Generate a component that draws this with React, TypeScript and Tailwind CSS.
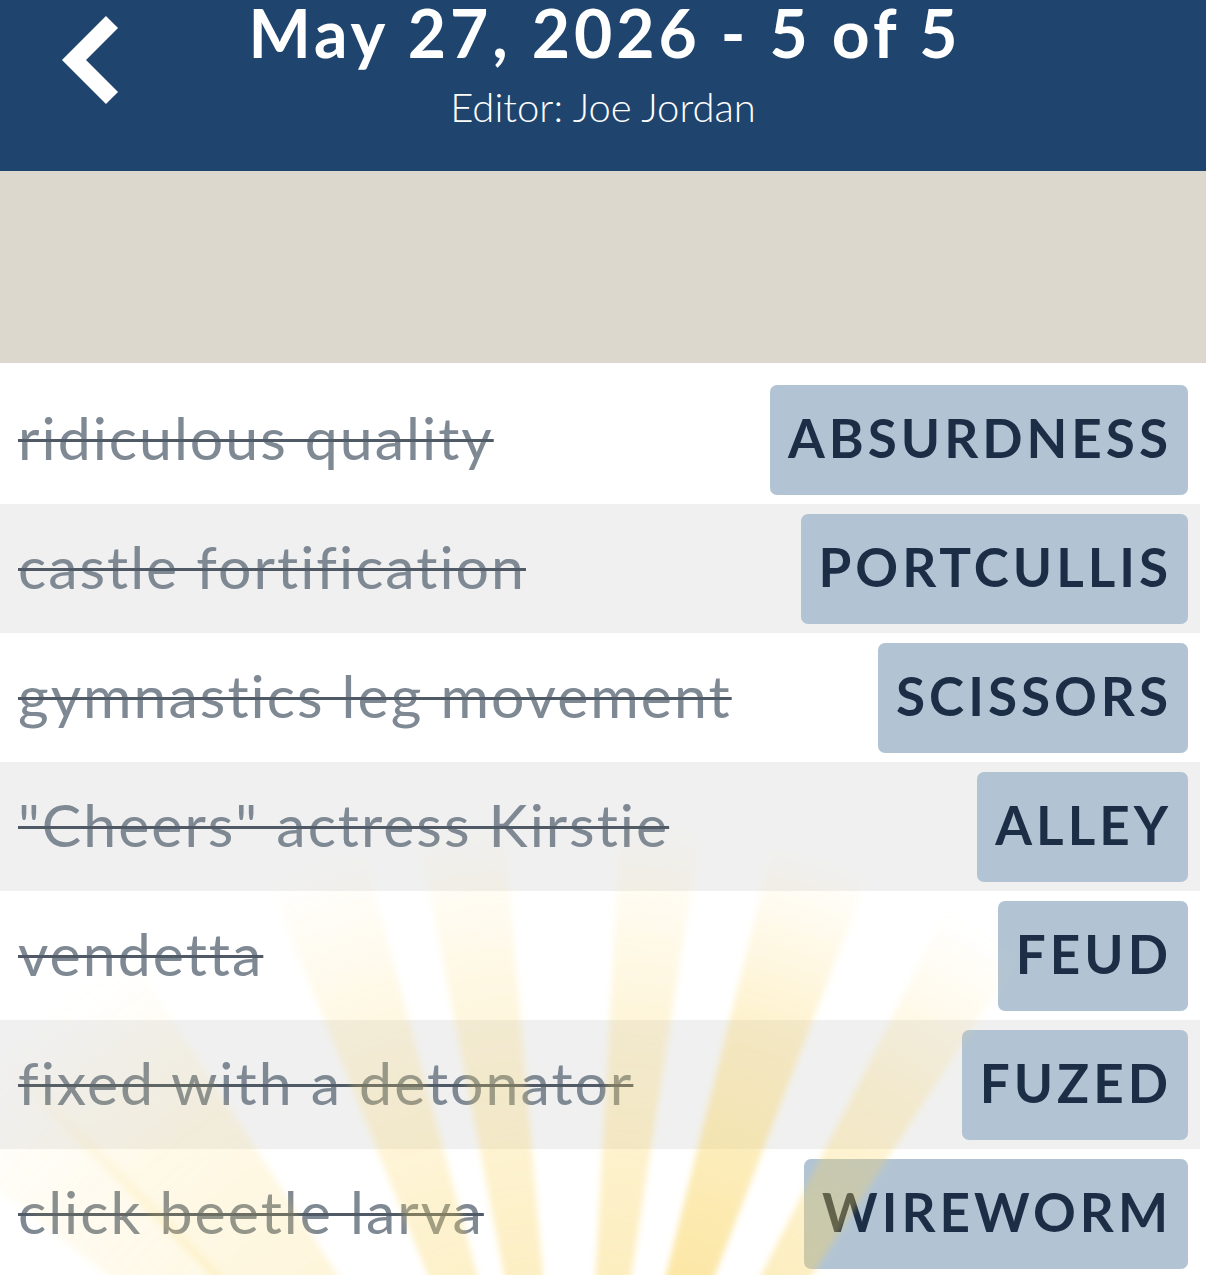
import React from 'react';

type Entry = { clue: string; answer: string };

const entries: Entry[] = [
  { clue: 'ridiculous quality', answer: 'ABSURDNESS' },
  { clue: 'castle fortification', answer: 'PORTCULLIS' },
  { clue: 'gymnastics leg movement', answer: 'SCISSORS' },
  { clue: '"Cheers" actress Kirstie', answer: 'ALLEY' },
  { clue: 'vendetta', answer: 'FEUD' },
  { clue: 'fixed with a detonator', answer: 'FUZED' },
  { clue: 'click beetle larva', answer: 'WIREWORM' },
];

// sunburst rays: [angle from vertical, half width, strength]
const rays: [number, number, number][] = [
  [-48, 4, 0.35],
  [-39, 6, 0.45],
  [-18.5, 3.5, 0.6],
  [-8, 3, 0.65],
  [6, 2.8, 0.7],
  [17.5, 3.5, 1],
  [30, 3, 0.75],
];

const OX = 575;
const OY = 1640;
const R = 1600;

function wedge(angle: number, half: number) {
  const rad = (d: number) => (d * Math.PI) / 180;
  const a = rad(angle - half);
  const b = rad(angle + half);
  const p1 = `${OX + R * Math.sin(a)},${OY - R * Math.cos(a)}`;
  const p2 = `${OX + R * Math.sin(b)},${OY - R * Math.cos(b)}`;
  return `${OX},${OY} ${p1} ${p2}`;
}

function Sunburst() {
  return (
    <svg
      className="pointer-events-none absolute left-0 top-0"
      width={1206}
      height={1275}
      viewBox="0 0 1206 1275"
    >
      <defs>
        <radialGradient id="glow" gradientUnits="userSpaceOnUse" cx={OX} cy={OY} r={820}>
          <stop offset="0" stopColor="#f9d25a" stopOpacity="0.6" />
          <stop offset="0.45" stopColor="#f9d25a" stopOpacity="0.55" />
          <stop offset="0.78" stopColor="#f9d25a" stopOpacity="0.3" />
          <stop offset="1" stopColor="#f9d25a" stopOpacity="0" />
        </radialGradient>
        <filter id="soft" x="-10%" y="-10%" width="120%" height="120%">
          <feGaussianBlur stdDeviation="3" />
        </filter>
      </defs>
      <g filter="url(#soft)">
        {rays.map(([angle, half, strength], i) => (
          <polygon key={i} points={wedge(angle, half)} fill="url(#glow)" opacity={strength} />
        ))}
      </g>
    </svg>
  );
}

export default function App() {
  return (
    <div className="relative w-[1206px] h-[1275px] overflow-hidden bg-white" style={{ fontFamily: 'Lato, "Noto Sans", sans-serif' }}>
      {/* Header */}
      <header className="grid grid-cols-[1fr_auto_1fr] h-[171px] bg-[#1f456e] text-white">
        <div className="pl-[50px] pt-[14px]">
          <svg width="80" height="96" viewBox="0 0 80 96">
            <polyline points="62,8 24,46 62,84" fill="none" stroke="white" strokeWidth="17" strokeLinejoin="miter" />
          </svg>
        </div>
        <div className="flex flex-col items-center">
          <h1 className="text-[66px] font-bold leading-none tracking-[4px] pl-[4px]">May 27, 2026 - 5 of 5</h1>
          <p className="text-[40px] font-light leading-none mt-[21px]">Editor: Joe Jordan</p>
        </div>
        <div />
      </header>

      {/* Puzzle strip */}
      <div className="h-[192px] bg-[#ddd8cd]" />

      {/* Clue list */}
      <ul className="pt-[12px]">
        {entries.map((e, i) => (
          <li
            key={e.answer}
            className={`flex items-center justify-between h-[129px] mr-[6px] pl-[18px] pr-[12px] ${i % 2 === 1 ? 'bg-[#f0f0f0]' : 'bg-white'}`}
          >
            <span className="text-[59px] leading-none tracking-[2px] text-[#7f8994] line-through decoration-[#4f5a66] decoration-[3px] whitespace-nowrap -mt-[4px]">
              {e.clue}
            </span>
            <span className="flex items-center h-[110px] pl-[18px] pr-[16px] pb-[3px] rounded-[7px] bg-[#b2c4d4] text-[53px] font-bold text-[#1c2e45] tracking-[4px]">
              {e.answer}
            </span>
          </li>
        ))}
      </ul>

      <Sunburst />
    </div>
  );
}
